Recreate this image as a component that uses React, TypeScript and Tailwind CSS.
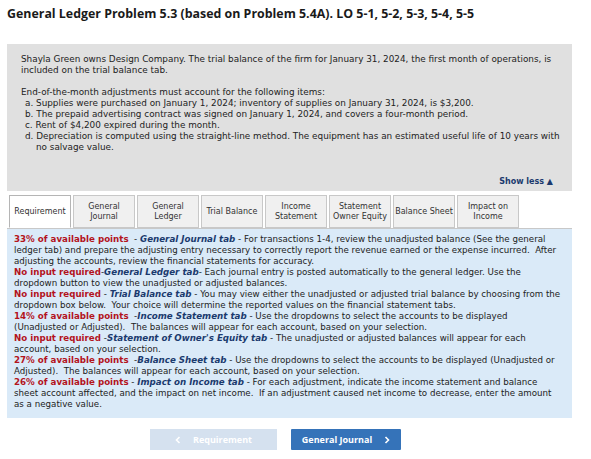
import * as React from "react";

const tabs = [
  ["Requirement"],
  ["General", "Journal"],
  ["General", "Ledger"],
  ["Trial Balance"],
  ["Income", "Statement"],
  ["Statement", "Owner Equity"],
  ["Balance Sheet"],
  ["Impact on", "Income"],
];

function Red({ children }: { children: React.ReactNode }) {
  return <span className="font-bold text-[#b3141d]">{children}</span>;
}

function Nav({ children }: { children: React.ReactNode }) {
  return <span className="font-bold italic text-[#1b3a6e]">{children}</span>;
}

function Chevron({ dir }: { dir: "left" | "right" }) {
  return (
    <svg width="6" height="8" viewBox="0 0 6 8" fill="none" stroke="currentColor" strokeWidth="1.6">
      {dir === "left" ? <path d="M4.5 1 L1.5 4 L4.5 7" /> : <path d="M1.5 1 L4.5 4 L1.5 7" />}
    </svg>
  );
}

export default function App(): React.JSX.Element {
  return (
    <div className="w-[591px] h-[459px] bg-white text-[#222] overflow-hidden">
      <h1 className="px-[7px] pt-[6px] text-[12.4px] leading-[16px] font-bold text-[#1a1a1a] font-['Open_Sans',sans-serif]">
        General Ledger Problem 5.3 (based on Problem 5.4A). LO 5-1, 5-2, 5-3, 5-4, 5-5
      </h1>

      <div className="ml-[7px] mt-[22px] w-[565px] bg-[#e0e0e0] pl-[14px] pr-[4px] pt-[10px] pb-[4px] font-['DejaVu_Sans',sans-serif] text-[8.85px] leading-[11px] text-[#222] whitespace-nowrap">
        <p>
          Shayla Green owns Design Company. The trial balance of the firm for January 31, 2024, the first month of operations, is
          <br />
          included on the trial balance tab.
        </p>
        <p className="mt-[11px]">End-of-the-month adjustments must account for the following items:</p>
        <ul className="pl-[4px]">
          <li>a. Supplies were purchased on January 1, 2024; inventory of supplies on January 31, 2024, is $3,200.</li>
          <li>b. The prepaid advertising contract was signed on January 1, 2024, and covers a four-month period.</li>
          <li>c. Rent of $4,200 expired during the month.</li>
          <li>
            d. Depreciation is computed using the straight-line method. The equipment has an estimated useful life of 10 years with
            <br />
            <span className="pl-[11px]">no salvage value.</span>
          </li>
        </ul>
        <div className="mt-[23px] flex justify-end pr-[15px]">
          <span className="font-bold text-[#1b3a6e] text-[8px]">Show less ▲</span>
        </div>
      </div>

      <div className="ml-[9px] mt-[4px] flex gap-[2px] font-['DejaVu_Sans',sans-serif] text-[8px] leading-[10px]">
        {tabs.map((t, i) => (
          <div
            key={i}
            className={
              "w-[62px] h-[33px] flex flex-col items-center justify-center text-center border " +
              (i === 0
                ? "bg-white border-[#b5b5b5] border-b-white text-[#333]"
                : "bg-[#f0f0f0] border-[#c8c8c8] text-[#333]")
            }
          >
            {t.map((l) => (
              <span key={l}>{l}</span>
            ))}
          </div>
        ))}
      </div>

      <div className="ml-[7px] w-[565px] bg-[#daeaf8] border-t border-[#c8c8c8] pl-[7px] pt-[5px] pb-[8px] font-['DejaVu_Sans',sans-serif] text-[8.7px] leading-[11px] text-[#222] whitespace-nowrap">
        <p>
          <Red>33% of available points</Red>&nbsp; - <Nav>General Journal tab</Nav> - For transactions 1-4, review the unadjusted balance (See the general
          <br />
          ledger tab) and prepare the adjusting entry necessary to correctly report the revenue earned or the expense incurred.&nbsp; After
          <br />
          adjusting the accounts, review the financial statements for accuracy.
        </p>
        <p>
          <Red>No input required</Red>-<Nav>General Ledger tab</Nav>- Each journal entry is posted automatically to the general ledger. Use the
          <br />
          dropdown button to view the unadjusted or adjusted balances.
        </p>
        <p>
          <Red>No input required</Red> - <Nav>Trial Balance tab</Nav> - You may view either the unadjusted or adjusted trial balance by choosing from the
          <br />
          dropdown box below.&nbsp; Your choice will determine the reported values on the financial statement tabs.
        </p>
        <p>
          <Red>14% of available points</Red>&nbsp; -<Nav>Income Statement tab</Nav> - Use the dropdowns to select the accounts to be displayed
          <br />
          (Unadjusted or Adjusted).&nbsp; The balances will appear for each account, based on your selection.
        </p>
        <p>
          <Red>No input required</Red> -<Nav>Statement of Owner's Equity tab</Nav> - The unadjusted or adjusted balances will appear for each
          <br />
          account, based on your selection.
        </p>
        <p>
          <Red>27% of available points</Red>&nbsp; -<Nav>Balance Sheet tab</Nav> - Use the dropdowns to select the accounts to be displayed (Unadjusted or
          <br />
          Adjusted).&nbsp; The balances will appear for each account, based on your selection.
        </p>
        <p>
          <Red>26% of available points</Red> - <Nav>Impact on Income tab</Nav> - For each adjustment, indicate the income statement and balance
          <br />
          sheet account affected, and the impact on net income.&nbsp; If an adjustment caused net income to decrease, enter the amount
          <br />
          as a negative value.
        </p>
      </div>

      <div className="mt-[11px] ml-[150px] flex gap-[14px] font-['Open_Sans',sans-serif] text-[9px] font-bold">
        <div className="w-[127px] h-[21px] bg-[#d5e1ef] text-white flex items-center justify-center gap-[12px]">
          <Chevron dir="left" />
          <span>Requirement</span>
        </div>
        <div className="w-[110px] h-[21px] bg-[#3573b9] text-white flex items-center justify-center gap-[12px] rounded-[1px]">
          <span>General Journal</span>
          <Chevron dir="right" />
        </div>
      </div>
    </div>
  );
}
